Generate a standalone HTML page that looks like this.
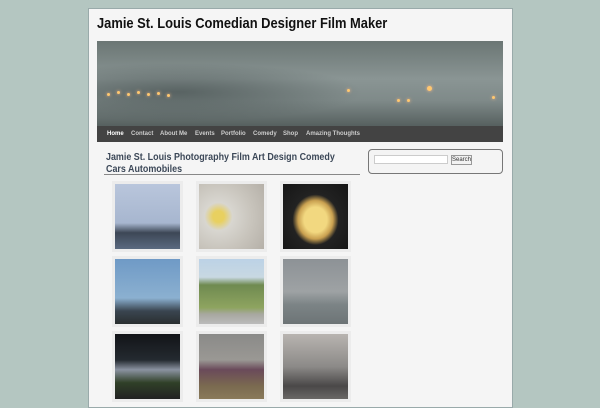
<!DOCTYPE html>
<html><head><style>
*{margin:0;padding:0;box-sizing:border-box}
body{width:600px;height:400px;background:#b4c6c1;font-family:"Liberation Sans",sans-serif;position:relative;overflow:hidden}
#page{position:absolute;left:88px;top:8px;width:425px;height:400px;background:#f5f5f5;border:1px solid #9aa;}
h1{position:absolute;left:97px;top:15px;font-size:15px;font-weight:bold;color:#111;white-space:nowrap;transform:scaleX(0.86);transform-origin:left}
#hdr{position:absolute;left:97px;top:41px;width:406px;height:85px;background:linear-gradient(180deg,#6b7674 0%,#8a9594 45%,#7f8a89 70%,#56605f 100%);overflow:hidden}
.l{position:absolute;width:3px;height:3px;border-radius:50%;background:#ffc870;box-shadow:0 0 3px #fb8}
#nav{position:absolute;left:97px;top:126px;width:406px;height:16px;background:#434343;font-size:6px;font-weight:bold;color:#ccc;white-space:nowrap}
#nav span{position:absolute;top:5px}
h2{position:absolute;left:106px;top:151px;font-size:10.5px;line-height:12px;font-weight:bold;color:#3c4858;width:300px;transform:scaleX(0.85);transform-origin:left}
#ul{position:absolute;left:104px;top:174px;width:256px;height:1px;background:#888}
#sb{position:absolute;left:368px;top:149px;width:135px;height:25px;border:1px solid #777;border-radius:4px;background:#f4f4f4}
#sb .in{position:absolute;left:5px;top:5px;width:74px;height:9px;border:1px solid #ccc;background:#fff}
#sb .bt{position:absolute;left:82px;top:5px;width:21px;height:10px;border:1px solid #999;background:#f2f2f2;font-size:6px;text-align:center;line-height:9px;color:#333}
.t{position:absolute;width:65px;height:65px;outline:3px solid #ececec}
</style></head><body>
<div id="page"></div>
<h1>Jamie St. Louis Comedian Designer Film Maker</h1>
<div id="hdr">
<div style="position:absolute;left:0;top:0;width:100%;height:100%;background:radial-gradient(ellipse at 20% 60%,rgba(60,70,70,.6),transparent 40%)"></div>
<div class="l" style="left:10px;top:52px"></div><div class="l" style="left:20px;top:50px"></div><div class="l" style="left:30px;top:52px"></div><div class="l" style="left:40px;top:50px"></div><div class="l" style="left:50px;top:52px"></div><div class="l" style="left:60px;top:51px"></div><div class="l" style="left:70px;top:53px"></div>
<div class="l" style="left:250px;top:48px"></div><div class="l" style="left:300px;top:58px"></div><div class="l" style="left:310px;top:58px"></div><div class="l" style="left:330px;top:45px;width:5px;height:5px"></div><div class="l" style="left:395px;top:55px"></div>
</div>
<div id="nav"><span style="left:10px;color:#fff">Home</span><span style="left:34px">Contact</span><span style="left:63px">About Me</span><span style="left:98px">Events</span><span style="left:124px">Portfolio</span><span style="left:156px">Comedy</span><span style="left:186px">Shop</span><span style="left:209px">Amazing Thoughts</span></div>
<h2>Jamie St. Louis Photography Film Art Design Comedy<br>Cars Automobiles</h2>
<div id="ul"></div>
<div id="sb"><div class="in"></div><div class="bt">Search</div></div>
<div class="t" style="left:115px;top:184px;background:linear-gradient(180deg,#b9c6dc,#a7b6cf 60%,#3d4756 75%,#5a6a80)"></div>
<div class="t" style="left:199px;top:184px;background:radial-gradient(circle at 30% 50%,#e8d060 10%,#d8d6d0 25%,#c8c4bc 60%,#b5b0a8)"></div>
<div class="t" style="left:283px;top:184px;background:radial-gradient(ellipse at 50% 55%,#f2d880 25%,#c9a050 38%,#222 50%,#151515)"></div>
<div class="t" style="left:115px;top:259px;background:linear-gradient(180deg,#6f9ac6,#8bb0d0 60%,#3a4550 80%,#2a2f30)"></div>
<div class="t" style="left:199px;top:259px;background:linear-gradient(180deg,#bcd2e6,#c8d8e2 28%,#6f8a50 40%,#8ea460 75%,#a8a8a0 85%,#bbb)"></div>
<div class="t" style="left:283px;top:259px;background:linear-gradient(180deg,#8d9296,#9ea2a4 50%,#7c8486 70%,#6d7476)"></div>
<div class="t" style="left:115px;top:334px;background:linear-gradient(180deg,#121418,#242a30 40%,#8a92a0 55%,#304028 75%,#222)"></div>
<div class="t" style="left:199px;top:334px;background:linear-gradient(180deg,#8a8a88,#9a9894 40%,#6a4a5a 55%,#7a6a50 80%,#8a7a5a)"></div>
<div class="t" style="left:283px;top:334px;background:linear-gradient(180deg,#b8b4b0,#8c8a88 50%,#4a4848 80%,#6a6866)"></div>
</body></html>
